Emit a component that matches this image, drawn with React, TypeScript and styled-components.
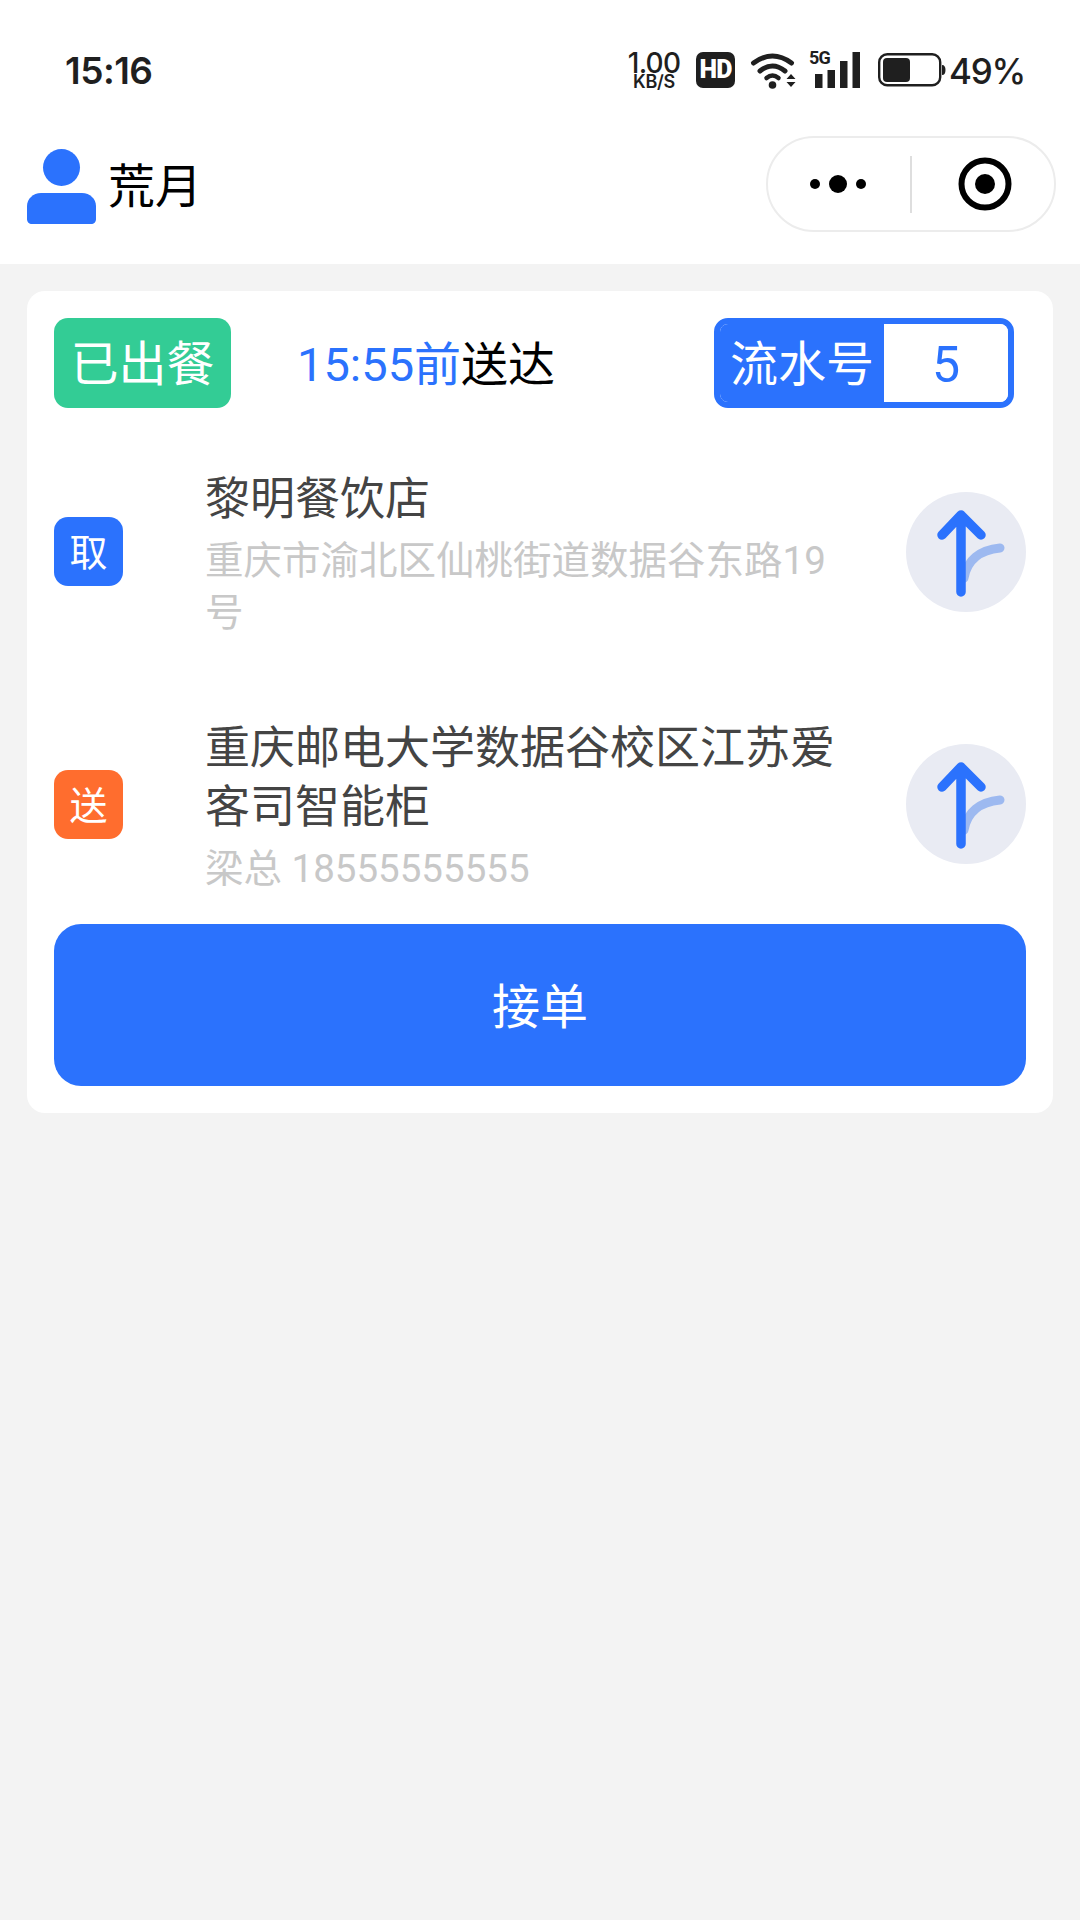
import React from 'react';
import styled, { createGlobalStyle } from 'styled-components';

const blue = '#2b72fd';

const GlobalStyle = createGlobalStyle`
  html, body {
    margin: 0;
    padding: 0;
    background: #f3f3f3;
  }
  body {
    font-family: Roboto, "Noto Sans CJK SC", sans-serif;
  }
  * {
    box-sizing: border-box;
  }
`;

const Page = styled.div`
  width: 1080px;
  height: 1920px;
  background: #f3f3f3;
`;

const Top = styled.header`
  background: #fff;
  height: 264px;
`;

const StatusBar = styled.div`
  height: 106px;
  padding: 52px 57px 0 66px;
  display: flex;
  align-items: flex-start;
  color: #1f1f1f;
`;

const Clock = styled.div`
  font-size: 37px;
  line-height: 38px;
  font-weight: 600;
  font-family: Inter, Roboto, sans-serif;
  letter-spacing: -0.5px;
  flex: 1;
  margin-left: -1px;
`;

const StatusIcons = styled.div`
  display: flex;
  align-items: flex-start;
`;

const Speed = styled.div`
  width: 54px;
  margin-right: 15px;
  text-align: center;
  display: flex;
  flex-direction: column;
  align-items: center;
  font-family: Inter, Roboto, sans-serif;
`;

const SpeedValue = styled.span`
  display: block;
  font-size: 28px;
  line-height: 23px;
  font-weight: 500;
  letter-spacing: -0.8px;
`;

const SpeedUnit = styled.span`
  display: block;
  font-size: 18px;
  line-height: 13px;
  font-weight: 600;
  letter-spacing: -0.3px;
`;

const HdBadge = styled.div`
  width: 39px;
  height: 36px;
  border-radius: 7px;
  background: #1f1f1f;
  color: #fff;
  font-size: 25px;
  font-weight: 900;
  line-height: 36px;
  text-align: center;
  letter-spacing: -0.8px;
  font-family: Roboto, sans-serif;
  margin-right: 15px;
`;

const WifiIcon = styled.svg`
  width: 47px;
  height: 37px;
  margin-right: 12px;
`;

const Signal = styled.div`
  position: relative;
  width: 51px;
  height: 36px;
  margin-right: 18px;
`;

const FiveG = styled.span`
  position: absolute;
  left: 0;
  top: -3px;
  font-size: 18px;
  line-height: 18px;
  font-weight: 700;
  letter-spacing: -0.8px;
  font-family: Roboto, sans-serif;
`;

const BatteryIcon = styled.svg`
  width: 68px;
  height: 36px;
  margin-top: 1px;
  margin-right: 3px;
`;

const Percent = styled.div`
  width: 74px;
  text-align: right;
  white-space: nowrap;
  font-size: 35px;
  line-height: 38px;
  font-weight: 500;
  font-family: Inter, Roboto, sans-serif;
  letter-spacing: -1.2px;
`;

const NavBar = styled.div`
  height: 158px;
  padding: 30px 24px 0 27px;
  display: flex;
  align-items: flex-start;
`;

const User = styled.div`
  display: flex;
  align-items: center;
  flex: 1;
  height: 96px;
`;

const Avatar = styled.svg`
  width: 69px;
  height: 76px;
  margin-right: 12px;
  margin-top: 6px;
`;

const UserName = styled.span`
  font-size: 47px;
  color: #000;
  line-height: 60px;
  margin-top: 6px;
`;

const Capsule = styled.div`
  width: 290px;
  height: 96px;
  border: 2px solid #ececec;
  border-radius: 48px;
  display: flex;
  align-items: center;
  background: #fff;
`;

const CapsulePart = styled.div`
  flex: 1;
  display: flex;
  align-items: center;
  justify-content: center;
`;

const Divider = styled.div`
  width: 2px;
  height: 57px;
  background: #dedede;
`;

const Dots = styled.svg`
  width: 56px;
  height: 20px;
  margin-right: 2px;
`;

const Target = styled.svg`
  width: 54px;
  height: 54px;
  margin-left: 4px;
`;

const Card = styled.section`
  margin: 27px 27px 0;
  padding: 27px;
  background: #fff;
  border-radius: 18px;
`;

const CardHead = styled.div`
  display: flex;
  align-items: center;
  height: 90px;
  padding-right: 12px;
`;

const StateTag = styled.div`
  width: 177px;
  height: 90px;
  border-radius: 14px;
  background: #33cc95;
  color: #fff;
  font-size: 48px;
  line-height: 94px;
  text-align: center;
`;

const Deadline = styled.div`
  margin-left: 66px;
  font-size: 47px;
  line-height: 94px;
  height: 90px;
  color: #000;
  flex: 1;
`;

const DeadlineTime = styled.span`
  color: ${blue};
`;

const Serial = styled.div`
  width: 300px;
  height: 90px;
  border: 6px solid ${blue};
  border-radius: 14px;
  display: flex;
  overflow: hidden;
`;

const SerialLabel = styled.div`
  width: 164px;
  background: ${blue};
  color: #fff;
  font-size: 48px;
  line-height: 82px;
  padding-left: 10px;
  white-space: nowrap;
`;

const SerialValue = styled.div`
  flex: 1;
  background: #fff;
  color: ${blue};
  font-size: 50px;
  line-height: 82px;
  text-align: center;
`;

const Stops = styled.div`
  display: flex;
  flex-direction: column;
  gap: 80px;
  margin-top: 59px;
`;

const Stop = styled.div`
  display: flex;
  align-items: center;
`;

const StopTag = styled.div<{ $color: string }>`
  width: 69px;
  height: 69px;
  flex-shrink: 0;
  border-radius: 14px;
  background: ${(p) => p.$color};
  color: #fff;
  font-size: 38px;
  line-height: 72px;
  text-align: center;
`;

const StopText = styled.div`
  width: 640px;
  margin-left: 82px;
  padding-top: 3px;
  margin-bottom: -3px;
  display: flex;
  flex-direction: column;
  gap: 6px;
`;

const StopName = styled.div`
  font-size: 45px;
  line-height: 59px;
  color: #444;
`;

const StopDetail = styled.div`
  font-size: 38.5px;
  line-height: 52px;
  color: #c8c8c8;
`;

const NavButton = styled.div`
  width: 120px;
  height: 120px;
  margin-left: auto;
  border-radius: 50%;
  background: #e9ebf3;
`;

const AcceptButton = styled.div`
  margin-top: 32px;
  height: 162px;
  border-radius: 27px;
  background: ${blue};
  color: #fff;
  font-size: 48px;
  line-height: 168px;
  text-align: center;
`;

const NavArrow = () => (
  <NavButton>
    <svg width="120" height="120" viewBox="0 0 120 120" fill="none" strokeLinecap="round" strokeLinejoin="round">
      <path d="M58 86C61 68 74 58 94 56" stroke="#9db9f0" strokeWidth="9" />
      <path d="M55 100V23M36 43L55 23L75 43" stroke={blue} strokeWidth="9.5" />
    </svg>
  </NavButton>
);

const stops = [
  {
    tag: '取',
    color: blue,
    name: '黎明餐饮店',
    detail: '重庆市渝北区仙桃街道数据谷东路19号',
  },
  {
    tag: '送',
    color: '#ff6d2e',
    name: '重庆邮电大学数据谷校区江苏爱客司智能柜',
    detail: '梁总 18555555555',
  },
];

const App: React.FC = () => {
  return (
    <Page>
      <GlobalStyle />
      <Top>
        <StatusBar>
          <Clock>15:16</Clock>
          <StatusIcons>
            <Speed>
              <SpeedValue>1.00</SpeedValue>
              <SpeedUnit>KB/S</SpeedUnit>
            </Speed>
            <HdBadge>HD</HdBadge>
            <WifiIcon viewBox="0 0 46 37" fill="none" stroke="#1f1f1f" strokeLinecap="round">
              <path d="M3 11Q22 -3 41 11" strokeWidth="5" />
              <path d="M9.5 19Q22 9 34.5 19" strokeWidth="5" />
              <path d="M16 26Q22 21 28 26" strokeWidth="4.5" />
              <circle cx="22" cy="33" r="3.8" fill="#1f1f1f" stroke="none" />
              <path d="M36 27L40.5 22L45 27ZM36 30H45L40.5 35Z" fill="#1f1f1f" stroke="none" />
            </WifiIcon>
            <Signal>
              <FiveG>5G</FiveG>
              <svg width="51" height="36" viewBox="0 0 51 36" fill="#1f1f1f">
                <rect x="6" y="22" width="7.5" height="14" />
                <rect x="18.5" y="18" width="7.5" height="18" />
                <rect x="31" y="9" width="7.5" height="27" />
                <rect x="43.5" y="0" width="7.5" height="36" />
              </svg>
            </Signal>
            <BatteryIcon viewBox="0 0 68 36" fill="none">
              <rect x="1.2" y="1.2" width="61" height="31" rx="8" stroke="#1f1f1f" strokeWidth="2.4" />
              <rect x="5" y="5" width="27" height="24" rx="4" fill="#1f1f1f" />
              <path d="M64 12C66.5 12 67.5 14 67.5 17C67.5 20 66.5 22 64 22Z" fill="#1f1f1f" />
            </BatteryIcon>
            <Percent>49%</Percent>
          </StatusIcons>
        </StatusBar>
        <NavBar>
          <User>
            <Avatar viewBox="0 0 69 76" fill={blue}>
              <circle cx="34.5" cy="18.5" r="18.5" />
              <path d="M14 44H55C63 44 69 50 69 57V70C69 73 67 75 64 75H5C2 75 0 73 0 70V57C0 50 6 44 14 44Z" />
            </Avatar>
            <UserName>荒月</UserName>
          </User>
          <Capsule>
            <CapsulePart>
              <Dots viewBox="0 0 56 20" fill="#000">
                <circle cx="5" cy="10" r="5" />
                <circle cx="28" cy="10" r="9" />
                <circle cx="51" cy="10" r="5" />
              </Dots>
            </CapsulePart>
            <Divider />
            <CapsulePart>
              <Target viewBox="0 0 54 54">
                <circle cx="27" cy="27" r="23.5" fill="none" stroke="#000" strokeWidth="6" />
                <circle cx="27" cy="27" r="10" fill="#000" />
              </Target>
            </CapsulePart>
          </Capsule>
        </NavBar>
      </Top>
      <Card>
        <CardHead>
          <StateTag>已出餐</StateTag>
          <Deadline>
            <DeadlineTime>15:55前</DeadlineTime>送达
          </Deadline>
          <Serial>
            <SerialLabel>流水号</SerialLabel>
            <SerialValue>5</SerialValue>
          </Serial>
        </CardHead>
        <Stops>
          {stops.map((stop) => (
            <Stop key={stop.tag}>
              <StopTag $color={stop.color}>{stop.tag}</StopTag>
              <StopText>
                <StopName>{stop.name}</StopName>
                <StopDetail>{stop.detail}</StopDetail>
              </StopText>
              <NavArrow />
            </Stop>
          ))}
        </Stops>
        <AcceptButton>接单</AcceptButton>
      </Card>
    </Page>
  );
};

export default App;
